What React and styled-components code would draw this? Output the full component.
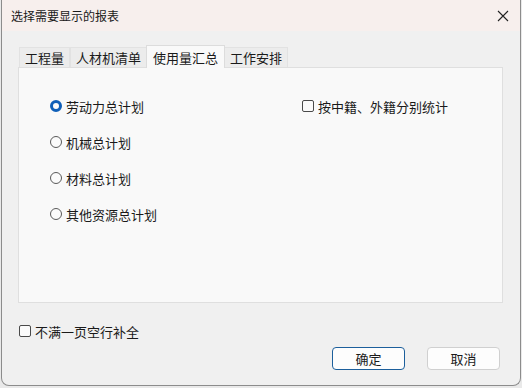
import React, { useState } from "react";
import styled, { createGlobalStyle } from "styled-components";

const GlobalStyle = createGlobalStyle`
  html, body {
    margin: 0;
    padding: 0;
    background: #e9e9e9;
  }
  body {
    font-family: "Noto Sans CJK SC", "Microsoft YaHei", sans-serif;
    color: #1a1a1a;
  }
`;

const Frame = styled.div`
  width: 518px;
  height: 385px;
  margin: 0 0 0 1px;
  border: 1px solid #8c8c8c;
  border-top: none;
  border-radius: 0 0 8px 8px;
  background: #f0f0f0;
  display: flex;
  flex-direction: column;
  overflow: hidden;
`;

const TitleBar = styled.div`
  height: 31px;
  display: flex;
  align-items: center;
  justify-content: space-between;
  padding: 0 9px 0 9px;
  background: #f7efed;
  font-size: 12px;
`;

const CloseIcon = styled.svg`
  width: 12px;
  height: 12px;
  margin-right: 2px;
`;

const Body = styled.div`
  flex: 1;
  display: flex;
  flex-direction: column;
  padding: 13px 17px 0 16px;
`;

const TabRow = styled.div`
  display: flex;
  align-items: flex-end;
  height: 23px;
  padding-left: 1px;
`;

const Tab = styled.div`
  height: ${(p) => (p.$active ? "23px" : "20px")};
  padding: 0 ${(p) => (p.$active ? "6px" : "5px")};
  margin-left: ${(p) => (p.$active ? "-1px" : "0")};
  margin-right: ${(p) => (p.$active ? "-1px" : "0")};
  display: flex;
  align-items: center;
  font-size: 13px;
  box-sizing: border-box;
  background: ${(p) => (p.$active ? "#f9f9f9" : "#ececec")};
  border: 1px solid ${(p) => (p.$active ? "#dcdcdc" : "#e2e2e2")};
  border-bottom: none;
  position: relative;
  z-index: ${(p) => (p.$active ? 2 : 1)};
  margin-bottom: ${(p) => (p.$active ? "-1px" : "0")};
  cursor: default;
`;

const Panel = styled.div`
  height: 236px;
  box-sizing: border-box;
  border: 1px solid #dfdfdf;
  background: #f9f9f9;
  display: grid;
  grid-template-columns: 252px 1fr;
  padding: 28px 0 0 31px;
`;

const OptionList = styled.div`
  display: flex;
  flex-direction: column;
  gap: 16px;
`;

const Option = styled.label`
  display: flex;
  align-items: center;
  height: 20px;
  font-size: 13px;
  gap: 4px;
`;

const Radio = styled.span`
  width: 12px;
  height: 12px;
  border-radius: 50%;
  box-sizing: border-box;
  border: ${(p) => (p.$checked ? "3.5px solid #0f5fb8" : "1px solid #5a5a5a")};
  background: #fbfbfb;
  flex-shrink: 0;
`;

const Check = styled.span`
  width: 12px;
  height: 12px;
  border-radius: 2px;
  box-sizing: border-box;
  border: 1px solid #4a4a4a;
  background: #fbfbfb;
  flex-shrink: 0;
`;

const Footer = styled.div`
  display: flex;
  flex-direction: column;
  padding: 18px 0 0 1px;
`;

const ButtonRow = styled.div`
  display: flex;
  justify-content: flex-end;
  gap: 22px;
  margin-top: 6px;
  padding-right: 3px;
`;

const Button = styled.button`
  width: 73px;
  height: 23px;
  box-sizing: border-box;
  border-radius: 4px;
  border: 1px solid ${(p) => (p.$primary ? "#1c5f9c" : "#d0d0d0")};
  background: #fdfdfd;
  font-family: inherit;
  font-size: 13px;
  color: #1a1a1a;
  padding: 0;
  display: flex;
  align-items: center;
  justify-content: center;
`;

const tabs = ["工程量", "人材机清单", "使用量汇总", "工作安排"];
const plans = ["劳动力总计划", "机械总计划", "材料总计划", "其他资源总计划"];

export default function App() {
  const [tab, setTab] = useState(2);
  const [plan, setPlan] = useState(0);

  return (
    <>
      <GlobalStyle />
      <Frame>
        <TitleBar>
          <span>选择需要显示的报表</span>
          <CloseIcon viewBox="0 0 12 12">
            <path d="M1 1 L11 11 M11 1 L1 11" stroke="#222" strokeWidth="1.1" fill="none" />
          </CloseIcon>
        </TitleBar>
        <Body>
          <TabRow>
            {tabs.map((t, i) => (
              <Tab key={t} $active={i === tab} onClick={() => setTab(i)}>
                {t}
              </Tab>
            ))}
          </TabRow>
          <Panel>
            <OptionList>
              {plans.map((p, i) => (
                <Option key={p} onClick={() => setPlan(i)}>
                  <Radio $checked={i === plan} />
                  {p}
                </Option>
              ))}
            </OptionList>
            <div>
              <Option>
                <Check />
                按中籍、外籍分别统计
              </Option>
            </div>
          </Panel>
          <Footer>
            <Option>
              <Check />
              不满一页空行补全
            </Option>
            <ButtonRow>
              <Button $primary>确定</Button>
              <Button>取消</Button>
            </ButtonRow>
          </Footer>
        </Body>
      </Frame>
    </>
  );
}
